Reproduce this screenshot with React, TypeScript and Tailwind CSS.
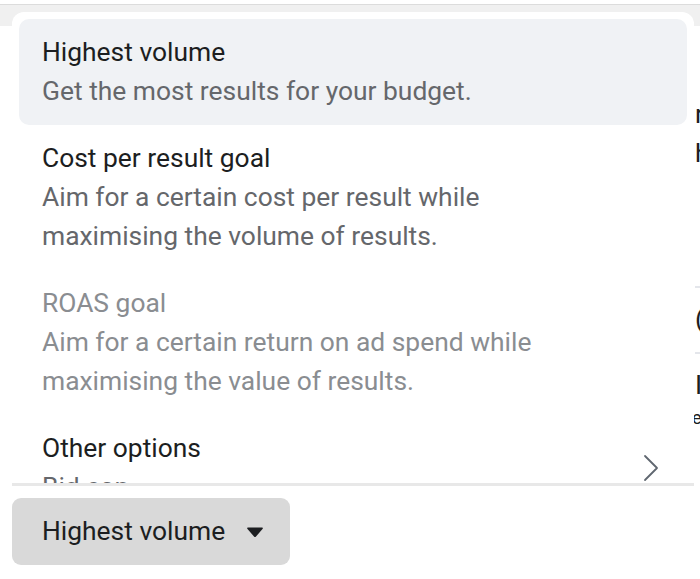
type Option = {
  title: string;
  lines: string[];
  disabled?: boolean;
  active?: boolean;
  submenu?: boolean;
};

const options: Option[] = [
  { title: 'Highest volume', lines: ['Get the most results for your budget.'], active: true },
  {
    title: 'Cost per result goal',
    lines: ['Aim for a certain cost per result while', 'maximising the volume of results.'],
  },
  {
    title: 'ROAS goal',
    lines: ['Aim for a certain return on ad spend while', 'maximising the value of results.'],
    disabled: true,
  },
  { title: 'Other options', lines: ['Bid cap'], submenu: true },
];

function OptionRow({ option }: { option: Option }) {
  return (
    <div
      className={`flex items-center justify-between rounded-[10px] py-[14px] pl-[23px] pr-[28px] ${
        option.active ? 'bg-[#f0f2f5]' : ''
      }`}
    >
      <div className="flex flex-col whitespace-nowrap">
        <span className={option.disabled ? 'text-[#8a8d91]' : 'text-[#1c1e21]'}>{option.title}</span>
        {option.lines.map((line) => (
          <span key={line} className={option.disabled ? 'text-[#8a8d91]' : 'text-[#65676b]'}>
            {line}
          </span>
        ))}
      </div>
      {option.submenu && (
        <svg width="16" height="28" viewBox="0 0 16 28" fill="none">
          <path d="M2 2 L14 14 L2 26" stroke="#606770" strokeWidth="1.8" strokeLinecap="round" strokeLinejoin="round" />
        </svg>
      )}
    </div>
  );
}

export default function App() {
  return (
    <div
      className="relative h-[579px] w-[700px] overflow-hidden bg-white text-[26.4px] leading-[39px]"
      style={{ fontFamily: 'Roboto, "Liberation Sans", sans-serif' }}
    >
      {/* page underneath */}
      <div className="flex h-full flex-col pt-[4px]">
        <div className="h-[22px] border-t border-[#dcdcdc] bg-[#f0f0f0]"></div>
        <div className="flex flex-1">
          <div className="flex w-[695px] shrink-0 flex-col justify-end pb-[14px] pl-[12px]">
            <button className="flex h-[67px] w-[278px] items-center rounded-[9px] bg-[#d9d9d9] pl-[30px] text-[#1c1e21]">
              <span>Highest volume</span>
              <svg className="ml-[21px]" width="18" height="12" viewBox="0 0 18 12">
                <path d="M2 1.5 H16 Q17.5 1.5 16.5 3 L10 10.5 Q9 11.5 8 10.5 L1.5 3 Q0.5 1.5 2 1.5 Z" fill="#1c1e21" />
              </svg>
            </button>
          </div>
          <div className="flex flex-col whitespace-nowrap pt-[69px] text-[#1c1e21]">
            <span>rn</span>
            <span>hi</span>
            <div className="mt-[113px] border-t-2 border-[#e4e6eb] pt-[12px]">
              <span>(</span>
            </div>
            <div className="mt-[13px] border-t-2 border-[#e4e6eb] pt-[12px]">
              <span>In</span>
            </div>
            <span className="-ml-[3px] text-[18px] leading-[26px]">el</span>
          </div>
        </div>
      </div>

      {/* dropdown menu */}
      <div className="absolute left-[12px] top-[12px] h-[474px] w-[682px] overflow-hidden rounded-t-[12px] border-b-[3px] border-[#e8e8e8] bg-white px-[7px] pt-[7px]">
        {options.map((o) => (
          <OptionRow key={o.title} option={o} />
        ))}
      </div>
    </div>
  );
}
